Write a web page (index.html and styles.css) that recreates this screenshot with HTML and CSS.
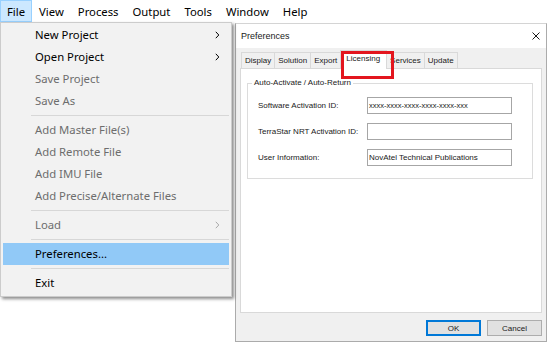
FILE: index.html
```html
<!DOCTYPE html>
<html>
<head>
<meta charset="utf-8">
<title>Preferences</title>
<link rel="stylesheet" href="styles.css">
</head>
<body>
<div class="menubar">
  <span class="mb-item active">File</span>
  <span class="mb-item">View</span>
  <span class="mb-item">Process</span>
  <span class="mb-item">Output</span>
  <span class="mb-item">Tools</span>
  <span class="mb-item">Window</span>
  <span class="mb-item">Help</span>
</div>
<div class="desktop">
  <div class="dialog">
    <div class="titlebar">
      <span class="title">Preferences</span>
      <svg class="close" width="8" height="8" viewBox="0 0 8 8"><path d="M0.5 0.5 L7.5 7.5 M7.5 0.5 L0.5 7.5" stroke="#1a1a1a" stroke-width="1" fill="none"/></svg>
    </div>
    <div class="dlg-body">
      <div class="tabs">
        <span class="tab first">Display</span>
        <span class="tab">Solution</span>
        <span class="tab">Export</span>
        <span class="tab selected">Licensing</span>
        <span class="tab">Services</span>
        <span class="tab">Update</span>
      </div>
      <div class="panel">
        <div class="group">
          <div class="legend">Auto-Activate / Auto-Return</div>
          <div class="rows">
            <div class="row"><span class="lbl">Software Activation ID:</span><span class="field small">xxxx-xxxx-xxxx-xxxx-xxxx-xxx</span></div>
            <div class="row"><span class="lbl">TerraStar NRT Activation ID:</span><span class="field"></span></div>
            <div class="row"><span class="lbl">User Information:</span><span class="field">NovAtel Technical Publications</span></div>
          </div>
        </div>
      </div>
      <div class="footer">
        <span class="btn default">OK</span>
        <span class="btn">Cancel</span>
      </div>
    </div>
  </div>
  <div class="dropdown">
    <div class="mi"><span>New Project</span><svg class="arrow" width="5" height="8" viewBox="0 0 5 8"><path d="M0.8 0.8 L3.8 4 L0.8 7.2" stroke="#000" stroke-width="1" fill="none"/></svg></div>
    <div class="mi"><span>Open Project</span><svg class="arrow" width="5" height="8" viewBox="0 0 5 8"><path d="M0.8 0.8 L3.8 4 L0.8 7.2" stroke="#000" stroke-width="1" fill="none"/></svg></div>
    <div class="mi disabled"><span>Save Project</span></div>
    <div class="mi disabled"><span>Save As</span></div>
    <div class="sep"></div>
    <div class="mi disabled"><span>Add Master File(s)</span></div>
    <div class="mi disabled"><span>Add Remote File</span></div>
    <div class="mi disabled"><span>Add IMU File</span></div>
    <div class="mi disabled"><span>Add Precise/Alternate Files</span></div>
    <div class="sep"></div>
    <div class="mi disabled"><span>Load</span><svg class="arrow" width="5" height="8" viewBox="0 0 5 8"><path d="M0.8 0.8 L3.8 4 L0.8 7.2" stroke="#a8a8a8" stroke-width="1" fill="none"/></svg></div>
    <div class="sep"></div>
    <div class="mi hot"><span>Preferences...</span></div>
    <div class="sep"></div>
    <div class="mi"><span>Exit</span></div>
  </div>
</div>
</body>
</html>
```

FILE: styles.css
```css
* { box-sizing: border-box; }
html, body { margin: 0; padding: 0; }
body {
  width: 548px;
  height: 343px;
  overflow: hidden;
  background: #ffffff;
  font-family: "Noto Sans", "Open Sans", sans-serif;
  color: #000;
}

/* ---------- menu bar ---------- */
.menubar {
  display: flex;
  height: 22px;
  background: #fff;
  font-size: 11.3px;
}
.mb-item {
  height: 22px;
  padding: 1px 6px 0;
  line-height: 20px;
  border: 1px solid transparent;
  white-space: nowrap;
}
.mb-item.active {
  background: #cce8ff;
  border-color: #99d1ff;
}

/* ---------- desktop ---------- */
.desktop {
  position: relative;
  height: 321px;
}

/* ---------- dropdown ---------- */
.dropdown {
  position: absolute;
  left: 0;
  top: 0;
  width: 232px;
  height: 275px;
  z-index: 5;
  background: #f2f2f2;
  border: 1px solid #cccccc;
  padding: 1px 2px 2px;
  box-shadow: 2px 2px 3px rgba(0, 0, 0, 0.45);
  font-size: 11.3px;
}
.mi {
  display: flex;
  align-items: center;
  height: 22px;
  line-height: 22px;
  padding: 0 9px 0 32px;
  white-space: nowrap;
}
.mi.disabled { color: #6d6d6d; }
.mi.hot { background: #91c9f7; }
.arrow { margin-left: auto; display: block; }
.sep {
  height: 7px;
  padding-top: 3px;
  margin-left: 28px;
}
.sep::before {
  content: "";
  display: block;
  height: 1px;
  background: #d7d7d7;
}

/* ---------- dialog ---------- */
.dialog {
  position: absolute;
  left: 235px;
  top: 1px;
  width: 312px;
  height: 319px;
  display: flex;
  flex-direction: column;
  background: #fff;
  border: 1px solid #ababab;
  border-top-color: #d4d4d4;
  font-family: "Liberation Sans", Arial, sans-serif;
  color: #1a1a1a;
}
.titlebar {
  height: 24px;
  flex: none;
  display: flex;
  align-items: center;
  padding-left: 5px;
  background: #fff;
}
.title { font-size: 9px; }
.close { margin-left: auto; margin-right: 6px; display: block; }

.dlg-body {
  flex: 1;
  display: flex;
  flex-direction: column;
  background: #f0f0f0;
  padding: 4px 4px 5px;
}

.tabs {
  display: flex;
  align-items: flex-end;
  height: 16px;
  flex: none;
  padding-left: 1px;
}
.tab {
  height: 16px;
  padding: 2px 3px 0;
  margin-left: -1px;
  border: 1px solid #d9d9d9;
  border-bottom: none;
  background: #f0f0f0;
  font-size: 8px;
  line-height: 12px;
  white-space: nowrap;
}
.tab.first { margin-left: 0; }
.tab.selected {
  position: relative;
  z-index: 1;
  height: 19px;
  margin-bottom: -1px;
  padding: 2px 6px 0 5px;
  background: #fff;
}
.tab.selected::after {
  content: "";
  position: absolute;
  left: 0;
  top: 0;
  width: 47px;
  height: 22px;
  border: 3px solid #e3161e;
}

.panel {
  height: 245px;
  flex: none;
  background: #fff;
  border: 1px solid #d9d9d9;
  padding-top: 14px;
  padding-left: 6px;
}
.group {
  width: 286px;
  border: 1px solid #dcdcdc;
  padding: 0 19px 12px 10px;
}
.legend {
  width: fit-content;
  margin: -6px 0 0 -6px;
  padding: 0 2px;
  background: #fff;
  font-size: 8px;
  line-height: 10px;
}
.rows {
  display: flex;
  flex-direction: column;
  gap: 9px;
  margin-top: 9px;
}
.row {
  display: flex;
  align-items: center;
  height: 17px;
}
.lbl {
  width: 109px;
  font-size: 8px;
  white-space: nowrap;
}
.field {
  width: 145px;
  height: 17px;
  border: 1px solid #a6a6a6;
  background: #fff;
  padding-left: 1px;
  font-size: 8px;
  line-height: 15px;
  white-space: nowrap;
  overflow: hidden;
}
.field.small { font-size: 7.5px; }

.footer {
  display: flex;
  justify-content: flex-end;
  gap: 6px;
  margin-top: 7px;
}
.btn {
  width: 55px;
  height: 16px;
  display: flex;
  align-items: center;
  justify-content: center;
  border: 1px solid #adadad;
  background: #e1e1e1;
  font-size: 8px;
}
.btn.default { border: 2px solid #0078d7; }
```
